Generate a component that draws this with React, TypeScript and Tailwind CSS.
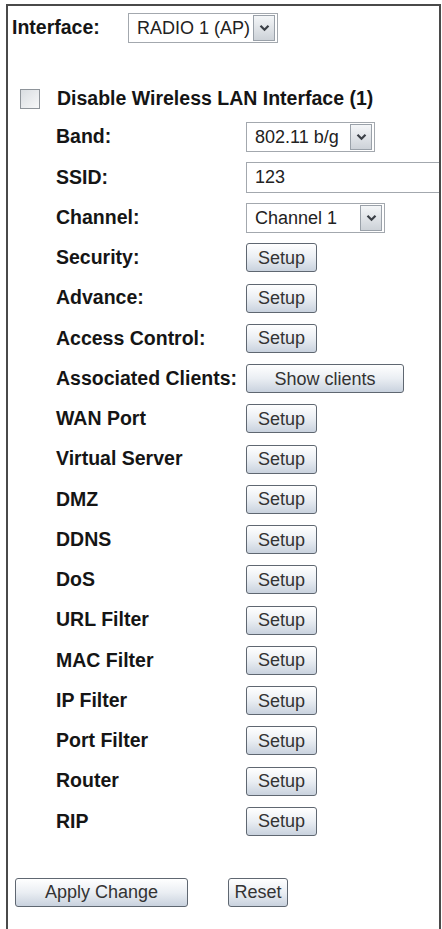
import React from "react";

const font = { fontFamily: '"Liberation Sans", Arial, sans-serif' };

function Chevron() {
  return (
    <svg width="11" height="8" viewBox="0 0 11 8">
      <path d="M1.5 1.8 L5.5 5.8 L9.5 1.8" fill="none" stroke="#3a3f46" strokeWidth="2.2" />
    </svg>
  );
}

function Select({ value, w }: { value: string; w: string }) {
  return (
    <div className={`${w} shrink-0 h-[30px] flex items-center border border-[#a3a8ae] bg-white pl-[8px] pr-[2px]`}>
      <span className="flex-1 text-[18px] text-[#222] whitespace-nowrap leading-none">{value}</span>
      <span className="w-[22px] h-[26px] flex items-center justify-center border border-[#9aa1a9] bg-gradient-to-b from-[#f4f6f8] to-[#cdd2d8]">
        <Chevron />
      </span>
    </div>
  );
}

function Btn({ label, w }: { label: string; w: string }) {
  return (
    <div
      className={`${w} shrink-0 h-[29px] flex items-center justify-center rounded-[3px] border-[1.5px] border-[#5f6771] bg-gradient-to-b from-[#ffffff] via-[#eaeef3] to-[#c9d2de] text-[18px] text-[#333] leading-none`}
    >
      {label}
    </div>
  );
}

const rows: { label: string; ctl: React.ReactNode }[] = [
  { label: "Band:", ctl: <Select value="802.11 b/g" w="w-[129px]" /> },
  {
    label: "SSID:",
    ctl: (
      <div className="w-[210px] shrink-0 h-[31px] flex items-center border border-[#a3a8ae] bg-white pl-[8px] text-[18px] text-[#222] leading-none">
        123
      </div>
    ),
  },
  { label: "Channel:", ctl: <Select value="Channel 1" w="w-[139px]" /> },
  { label: "Security:", ctl: <Btn label="Setup" w="w-[71px]" /> },
  { label: "Advance:", ctl: <Btn label="Setup" w="w-[71px]" /> },
  { label: "Access Control:", ctl: <Btn label="Setup" w="w-[71px]" /> },
  { label: "Associated Clients:", ctl: <Btn label="Show clients" w="w-[158px]" /> },
  { label: "WAN Port", ctl: <Btn label="Setup" w="w-[71px]" /> },
  { label: "Virtual Server", ctl: <Btn label="Setup" w="w-[71px]" /> },
  { label: "DMZ", ctl: <Btn label="Setup" w="w-[71px]" /> },
  { label: "DDNS", ctl: <Btn label="Setup" w="w-[71px]" /> },
  { label: "DoS", ctl: <Btn label="Setup" w="w-[71px]" /> },
  { label: "URL Filter", ctl: <Btn label="Setup" w="w-[71px]" /> },
  { label: "MAC Filter", ctl: <Btn label="Setup" w="w-[71px]" /> },
  { label: "IP Filter", ctl: <Btn label="Setup" w="w-[71px]" /> },
  { label: "Port Filter", ctl: <Btn label="Setup" w="w-[71px]" /> },
  { label: "Router", ctl: <Btn label="Setup" w="w-[71px]" /> },
  { label: "RIP", ctl: <Btn label="Setup" w="w-[71px]" /> },
];

export default function App() {
  return (
    <div className="w-[442px] h-[929px] bg-white overflow-hidden" style={font}>
      <div className="ml-[6px] mt-[4px] w-[435px] h-[925px] border-l-2 border-t-2 border-r-2 border-[#4a4a4a] overflow-hidden">
        {/* Interface row */}
        <div className="mt-[7px] flex items-center h-[30px]">
          <span className="ml-[4px] w-[116px] shrink-0 text-[19.5px] font-bold text-[#151515] leading-none">Interface:</span>
          <Select value="RADIO 1 (AP)" w="w-[150px]" />
        </div>

        {/* Checkbox row */}
        <div className="mt-[46px] flex items-center h-[20px]">
          <span className="ml-[12px] w-[20px] h-[20px] shrink-0 border border-[#8e949a] bg-gradient-to-br from-[#d9dde1] to-[#f7f8f9]" />
          <span className="ml-[17px] text-[19.5px] font-bold text-[#151515] leading-none whitespace-nowrap">
            Disable Wireless LAN Interface (1)
          </span>
        </div>

        {/* Settings rows */}
        <div className="mt-[8px] flex flex-col">
          {rows.map((r) => (
            <div key={r.label} className="h-[40.25px] flex items-center">
              <span className="ml-[48px] w-[190px] shrink-0 text-[19.5px] font-bold text-[#151515] leading-none whitespace-nowrap">
                {r.label}
              </span>
              {r.ctl}
            </div>
          ))}
        </div>

        {/* Bottom buttons */}
        <div className="mt-[36px] flex items-center">
          <div className="ml-[7px]">
            <Btn label="Apply Change" w="w-[173px]" />
          </div>
          <div className="ml-[40px]">
            <Btn label="Reset" w="w-[60px]" />
          </div>
        </div>
      </div>
    </div>
  );
}
